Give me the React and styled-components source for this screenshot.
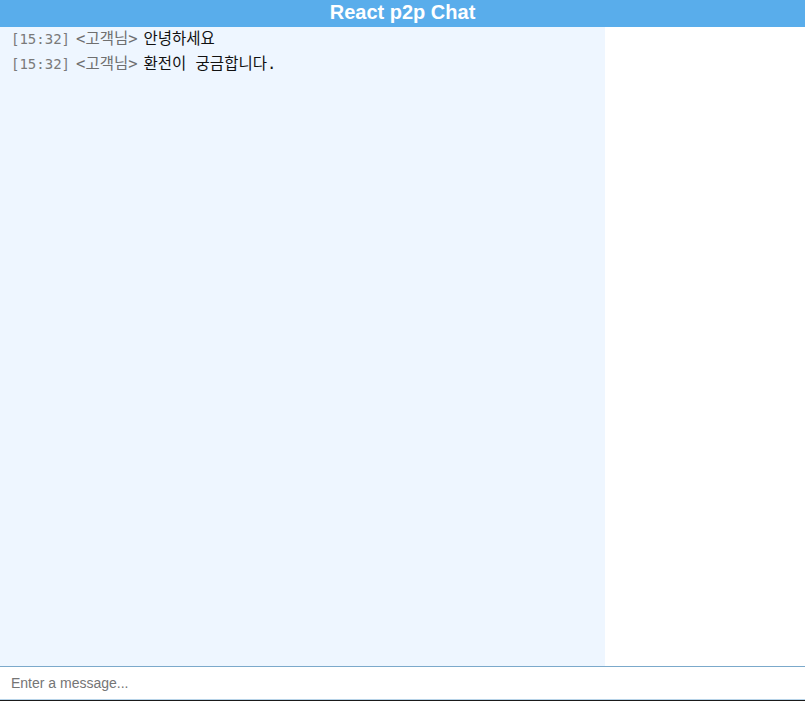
import React from 'react';
import styled, { createGlobalStyle } from 'styled-components';

const GlobalStyle = createGlobalStyle`
  html, body {
    margin: 0;
    padding: 0;
    height: 100%;
    background: #ffffff;
  }
  #root {
    height: 100%;
  }
`;

const Page = styled.div`
  display: flex;
  flex-direction: column;
  height: 701px;
  font-family: 'Liberation Sans', Arial, sans-serif;
`;

const Header = styled.header`
  height: 27px;
  flex: none;
  background: #59adeb;
  color: #ffffff;
  font-weight: 700;
  font-size: 20px;
  line-height: 24px;
  text-align: center;
`;

const Body = styled.div`
  flex: 1;
  display: flex;
  min-height: 0;
`;

const Messages = styled.div`
  width: 605px;
  background: #eef6ff;
  padding: 0 11px;
  box-sizing: border-box;
`;

const Side = styled.div`
  flex: 1;
  background: #ffffff;
`;

const Line = styled.div`
  display: flex;
  align-items: baseline;
  gap: 6px;
  height: 25px;
  line-height: 25px;
  font-family: 'DejaVu Sans Mono', 'Noto Sans CJK KR', monospace;
`;

const Time = styled.span`
  font-size: 14px;
  color: #7a7a7a;
`;

const Nick = styled.span`
  color: #6f6f6f;
  font-size: 15.5px;
`;

const Text = styled.span`
  color: #111111;
  font-size: 15.5px;
`;

const InputBar = styled.div`
  flex: none;
  border-top: 1px solid #7ba9cb;
  border-bottom: 1px solid #1a1a1a;
`;

const Input = styled.input`
  display: block;
  width: 100%;
  height: 33px;
  box-sizing: border-box;
  border: none;
  border-bottom: 1px solid #b7d3e8;
  outline: none;
  padding: 0 11px;
  font-family: 'Liberation Sans', Arial, sans-serif;
  font-size: 14px;
  color: #222;
  background: #ffffff;

  &::placeholder {
    color: #757575;
  }
`;

const messages = [
  { time: '15:32', nick: '고객님', text: '안녕하세요' },
  { time: '15:32', nick: '고객님', text: '환전이 궁금합니다.' },
];

export default function App() {
  return (
    <>
      <GlobalStyle />
      <Page>
        <Header>React p2p Chat</Header>
        <Body>
          <Messages>
            {messages.map((m, i) => (
              <Line key={i}>
                <Time>[{m.time}]</Time>
                <Nick>&lt;{m.nick}&gt;</Nick>
                <Text>{m.text}</Text>
              </Line>
            ))}
          </Messages>
          <Side />
        </Body>
        <InputBar>
          <Input placeholder="Enter a message..." />
        </InputBar>
      </Page>
    </>
  );
}
